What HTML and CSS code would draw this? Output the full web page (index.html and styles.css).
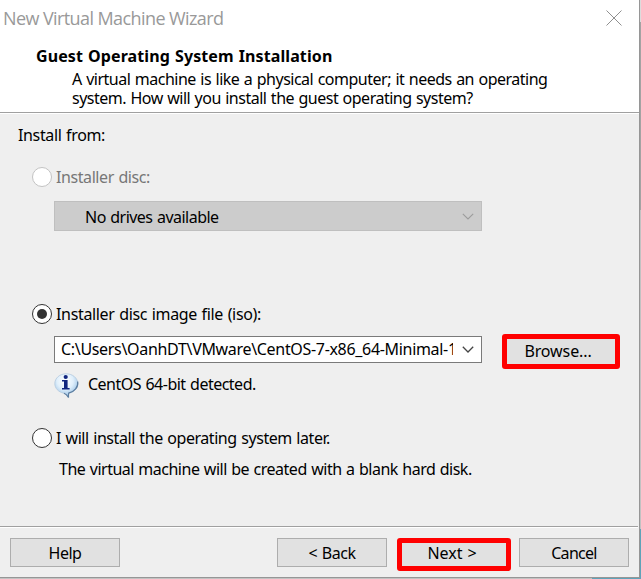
FILE: index.html
```
<!DOCTYPE html>
<html lang="en">
<head>
<meta charset="utf-8">
<title>New Virtual Machine Wizard</title>
<link rel="stylesheet" href="styles.css">
</head>
<body>
<div class="desktop">
  <main class="window">
    <header class="header">
      <div class="titlebar">
        <span class="title">New Virtual Machine Wizard</span>
        <svg class="close" width="16" height="16" viewBox="0 0 16 16"><path d="M.5.5l15 15M15.500.5l-15 15" fill="none" stroke="#8f8f8f" stroke-width="1"/></svg>
      </div>
      <h1>Guest Operating System Installation</h1>
      <p class="intro">A virtual machine is like a physical computer; it needs an operating<br><span class="intro-end">system. How will you install the guest operating system?</span></p>
    </header>
    <section class="body">
      <p class="from">Install from:</p>
      <div class="option option-disc disabled"><span class="radio"></span><span class="t-disc">Installer disc:</span></div>
      <div class="combo combo-disabled">
        <span class="t-drive">No drives available</span>
        <svg width="12" height="7" viewBox="0 0 12 7"><path d="M.8.800L6 6l5.200-5.200" fill="none" stroke="#9c9c9c" stroke-width="1.100"/></svg>
      </div>
      <div class="option option-iso"><span class="radio checked"></span><span class="t-iso">Installer disc image file (iso):</span></div>
      <div class="file-row">
        <div class="combo combo-file">
          <span class="path">C:\Users\OanhDT\VMware\CentOS-7-x86_64-Minimal-1</span>
          <svg width="12" height="7" viewBox="0 0 12 7"><path d="M.8.800L6 6l5.200-5.200" fill="none" stroke="#444" stroke-width="1.300"/></svg>
        </div>
        <div class="button marked browse">Browse...</div>
      </div>
      <div class="detected">
        <svg width="25" height="26" viewBox="0 0 25 26">
          <defs>
            <radialGradient id="bubble" cx=".45" cy=".3" r=".7"><stop offset="0" stop-color="#fff"/><stop offset=".5" stop-color="#e0effb"/><stop offset="1" stop-color="#8fbbe2"/></radialGradient>
          </defs>
          <path d="M12.200.8C5.800.800.800 5.100.800 10.600c0 4.600 3.600 8.500 8.700 9.500 2.200.5 3.500 2.100 5 4.400-.1-1.900-.1-3.300.2-4.400 5.200-.9 9.100-4.700 9.100-9.500C23.800 5.100 18.600.8 12.200.8z" fill="url(#bubble)" stroke="#b4c9dd" stroke-width=".8"/>
          <path d="M23.700 8.500c.7 5.700-3.200 10.400-9 11.600-.3 1.100-.3 2.500-.2 4.400-1.200-2-2.600-3.700-4.600-4.300" fill="none" stroke="#5c7d9f" stroke-width="1.200"/>
          <circle cx="11.700" cy="4" r="2.100" fill="#10257f"/>
          <path d="M8 7h5.600v8h2v1.600H8V15h2V8.600H8z" fill="#10257f"/>
        </svg>
        <span class="t-detected">CentOS 64-bit detected.</span>
      </div>
      <div class="option option-later"><span class="radio"></span><span class="t-later">I will install the operating system later.</span></div>
      <p class="note">The virtual machine will be created with a blank hard disk.</p>
    </section>
    <footer class="footer">
      <div class="button help">Help</div>
      <div class="button back">&lt; Back</div>
      <div class="button marked next">Next &gt;</div>
      <div class="button cancel">Cancel</div>
    </footer>
  </main>
</div>
</body>
</html>
```
FILE: styles.css
```
* { box-sizing: border-box; }
body {
  margin: 0;
  font: 16px/20px "Noto Sans", "Liberation Sans", sans-serif;
  letter-spacing: -0.5px;
  word-spacing: 0.8px;
  color: #000;
  white-space: nowrap;
}
p, h1 { margin: 0; }
svg { display: block; flex: none; }

.desktop {
  height: 579px;
  overflow: hidden;
  background:
    linear-gradient(#5fa3b9, #5fa3b9) 592px 578px / 49px 1px no-repeat,
    linear-gradient(#5fa3b9, #5fa3b9) 640px 529px / 1px 50px no-repeat,
    linear-gradient(#dcdcdc 22px, #a3a3a3 22px, #a3a3a3 210px, #c2c2c2 210px);
}
.window {
  display: flex;
  flex-direction: column;
  width: 640px;
  height: 578px;
  border-right: 1px solid #969696;
  border-bottom: 1px solid #969696;
  background: #efefef;
}

.header {
  height: 113px;
  background: #fff;
  border-bottom: 1px solid #a0a0a0;
}
.titlebar {
  display: flex;
  justify-content: space-between;
  height: 46px;
  padding: 6px 17px 0 3px;
}
.title {
  font: 18px/24px "Open Sans", "Noto Sans", sans-serif;
  letter-spacing: -0.59px;
  word-spacing: 0;
  color: #999;
}
.close { margin-top: 4px; }
h1 {
  padding-left: 36px;
  font-size: 16px;
  line-height: 20px;
  letter-spacing: 0.1px;
}
.intro { padding: 4px 0 0 72px; line-height: 19px; }
.intro-end { letter-spacing: -0.505px; }

.body {
  flex: 1;
  border-top: 1px solid #fff;
}
.from { padding: 11px 0 0 18px; letter-spacing: -0.36px; }

.option { display: flex; gap: 4px; height: 20px; margin-left: 32px; }
.option-disc { margin-top: 22px; }
.option-iso { margin-top: 73px; }
.option-later { margin-top: 29px; }
.disabled { color: #777; }
.radio {
  display: grid;
  place-items: center;
  width: 20px;
  height: 20px;
  border: 1px solid #333;
  border-radius: 50%;
  background: #fff;
}
.disabled .radio { border-color: #c3c3c3; }
.checked::after {
  content: "";
  width: 10px;
  height: 10px;
  border-radius: 50%;
  background: #333;
}
.t-disc { letter-spacing: -0.42px; }
.t-iso { letter-spacing: -0.34px; }
.t-later { letter-spacing: -0.44px; }

.combo {
  display: flex;
  align-items: center;
  justify-content: space-between;
  width: 428px;
  border: 1px solid #7a7a7a;
  background: #fff;
}
.combo-disabled {
  height: 30px;
  margin: 14px 0 0 54px;
  padding: 0 7px 0 30px;
  background: #ccc;
  border-color: #bfbfbf;
}
.t-drive { padding-top: 2px; letter-spacing: -0.52px; }
.file-row {
  display: flex;
  align-items: center;
  gap: 20px;
  height: 35px;
  margin: 10px 0 0 54px;
}
.combo-file { height: 27px; margin-bottom: 4px; padding: 0 7px 0 6px; }
.path {
  width: 392px;
  margin-bottom: 2px;
  overflow: hidden;
  letter-spacing: -0.32px;
}

.button {
  height: 29px;
  border: 1px solid #adadad;
  background: #e1e1e1;
  text-align: center;
  line-height: 28px;
}
.marked { border: 5px solid #f00; border-radius: 3px; }
.browse {
  width: 118px;
  height: 35px;
  padding-right: 6px;
  line-height: 25px;
  letter-spacing: -0.11px;
}

.detected {
  display: flex;
  gap: 9px;
  height: 26px;
  margin: 4px 0 0 54px;
}
.t-detected { padding-top: 1px; letter-spacing: -0.51px; }
.note { padding: 11px 0 0 59px; }

.footer {
  display: flex;
  height: 51px;
  margin-right: 1px;
  padding: 10px 0 0 10px;
  border-top: 1px solid #a0a0a0;
  box-shadow: inset 0 1px #fff;
}
.help, .back, .cancel { width: 110px; }
.footer .button { margin-top: 1px; }
.back { margin-left: 157px; letter-spacing: -0.42px; }
.next {
  width: 114px;
  height: 33px;
  margin-left: 10px;
  padding-right: 4px;
  line-height: 20px;
  letter-spacing: 0;
}
.cancel { margin-left: 8px; letter-spacing: -0.7px; }
```
